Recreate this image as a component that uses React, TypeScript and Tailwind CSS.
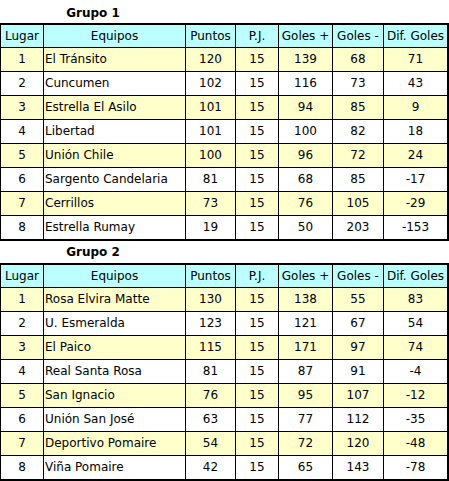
const grupo1 = [
  [1, "El Tránsito", 120, 15, 139, 68, 71],
  [2, "Cuncumen", 102, 15, 116, 73, 43],
  [3, "Estrella El Asilo", 101, 15, 94, 85, 9],
  [4, "Libertad", 101, 15, 100, 82, 18],
  [5, "Unión Chile", 100, 15, 96, 72, 24],
  [6, "Sargento Candelaria", 81, 15, 68, 85, -17],
  [7, "Cerrillos", 73, 15, 76, 105, -29],
  [8, "Estrella Rumay", 19, 15, 50, 203, -153],
] as const;

const grupo2 = [
  [1, "Rosa Elvira Matte", 130, 15, 138, 55, 83],
  [2, "U. Esmeralda", 123, 15, 121, 67, 54],
  [3, "El Paico", 115, 15, 171, 97, 74],
  [4, "Real Santa Rosa", 81, 15, 87, 91, -4],
  [5, "San Ignacio", 76, 15, 95, 107, -12],
  [6, "Unión San José", 63, 15, 77, 112, -35],
  [7, "Deportivo Pomaire", 54, 15, 72, 120, -48],
  [8, "Viña Pomaire", 42, 15, 65, 143, -78],
] as const;

const headers = ["Lugar", "Equipos", "Puntos", "P.J.", "Goles +", "Goles -", "Dif. Goles"];

function Tabla({ rows }: { rows: ReadonlyArray<ReadonlyArray<string | number>> }) {
  return (
    <div className="grid grid-cols-[42px_141px_49px_42px_53px_50px_63px] gap-px bg-black border-t-2 border-r-2 border-b-2 border-l border-black w-[449px]">
      {headers.map((h) => (
        <div key={h} className="h-[22px] bg-[#bbffff] flex items-center justify-center leading-[15px] whitespace-nowrap">
          {h}
        </div>
      ))}
      {rows.map((r, i) =>
        r.map((c, j) => (
          <div
            key={`${i}-${j}`}
            className={`h-[23px] flex items-center leading-[15px] whitespace-nowrap ${
              i % 2 === 0 ? "bg-[#ffffcc]" : "bg-white"
            } ${j === 1 ? "justify-start pl-[1px]" : "justify-center"}`}
          >
            {c}
          </div>
        ))
      )}
    </div>
  );
}

export default function App() {
  return (
    <div className="w-[449px] bg-white text-black text-[12px] font-['DejaVu_Sans',sans-serif]">
      <div className="w-[186px] flex justify-center pt-[6px] pb-[2px] leading-[15px] font-bold">Grupo 1</div>
      <Tabla rows={grupo1} />
      <div className="w-[186px] flex justify-center pt-[4px] pb-[3px] leading-[15px] font-bold">Grupo 2</div>
      <Tabla rows={grupo2} />
    </div>
  );
}
